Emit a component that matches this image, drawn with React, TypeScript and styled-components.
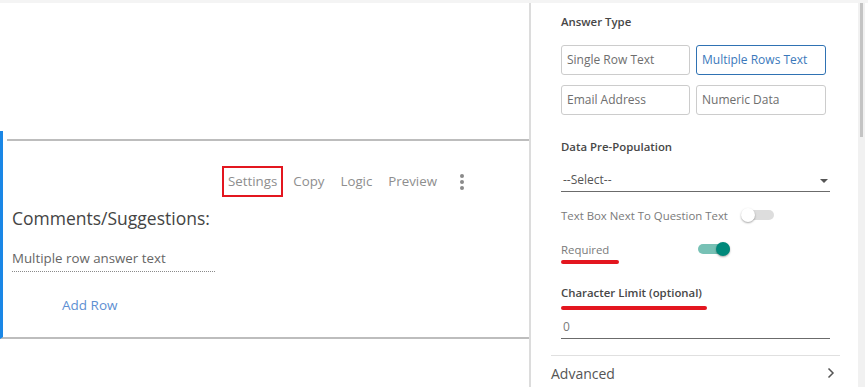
import React from 'react'
import styled, { createGlobalStyle } from 'styled-components'

const GlobalStyle = createGlobalStyle`
    html, body {
        margin: 0;
        padding: 0;
        background: #ffffff;
        font-family: 'Open Sans', 'Noto Sans', sans-serif;
    }
    * {
        box-sizing: border-box;
    }
`

const Page = styled.div`
    width: 868px;
    height: 387px;
    overflow: hidden;
    border-top: 3px solid #f4f4f4;
    display: flex;
`

const LeftPane = styled.div`
    width: 529px;
    padding-top: 128px;
`

const QuestionCard = styled.div`
    border-left: 3px solid #1a87e6;
    border-bottom: 2px solid #bdbdbd;
    padding-top: 8px;
    height: 208px;
`

const CardTopLine = styled.div`
    margin-left: 4px;
    height: 2px;
    background: #bdbdbd;
`

const Toolbar = styled.div`
    display: flex;
    align-items: center;
    justify-content: flex-end;
    gap: 16px;
    padding-right: 65px;
    margin-top: 25px;
    height: 31px;
`

const ToolLink = styled.span<{ highlighted?: boolean }>`
    font-size: 13.3px;
    color: #8e8e8e;
    line-height: 27px;
    padding: 0 ${props => props.highlighted ? '4px' : '0'};
    border: 2px solid ${props => props.highlighted ? '#e3161f' : 'transparent'};
    margin: 0 ${props => props.highlighted ? '-6px' : '-2px'};
`

const Kebab = styled.div`
    display: flex;
    flex-direction: column;
    gap: 2px;
    margin-left: 7px;
`

const Dot = styled.span`
    width: 4px;
    height: 4px;
    border-radius: 50%;
    background: #8a8a8a;
`

const CardBody = styled.div`
    padding-left: 9px;
`

const QuestionTitle = styled.div`
    font-size: 17.5px;
    color: #444444;
    line-height: 24px;
    margin-top: 9px;
`

const AnswerLine = styled.div`
    width: 203px;
    margin-top: 19px;
    font-size: 13.3px;
    color: #666666;
    line-height: 18px;
    padding-bottom: 4px;
    border-bottom: 1px dotted #8a8a8a;
`

const AddRow = styled.div`
    margin: 23px 0 0 50px;
    font-size: 13.5px;
    color: #5d8fd2;
    line-height: 20px;
`

const RightPanel = styled.div`
    width: 339px;
    display: flex;
    border-left: 2px solid #dcdcdc;
`

const PanelContent = styled.div`
    flex: 1;
    padding: 0 28px 0 30px;
`

const ScrollTrack = styled.div`
    width: 7px;
    margin-right: 3px;
    background: #f1f1f1;
    padding: 0 2px;
`

const ScrollThumb = styled.div`
    width: 3px;
    height: 134px;
    background: #c4c4c4;
`

const SectionLabel = styled.div<{ top: number }>`
    margin-top: ${props => props.top}px;
    font-size: 11.4px;
    font-weight: 600;
    color: #474747;
    line-height: 16px;
`

const OptionGrid = styled.div`
    margin-top: 15px;
    display: grid;
    grid-template-columns: 129px 130px;
    column-gap: 6px;
    row-gap: 10px;
`

const OptionBox = styled.div<{ selected?: boolean }>`
    height: 30px;
    border: 1px solid ${props => props.selected ? '#2f72b3' : '#cccccc'};
    border-radius: 3px;
    padding-left: 5px;
    font-size: 12px;
    line-height: 28px;
    color: ${props => props.selected ? '#3b79bb' : '#6e6e6e'};
`

const SelectBox = styled.div`
    margin-top: 14px;
    height: 23px;
    display: flex;
    align-items: center;
    justify-content: space-between;
    border-bottom: 1px solid #6b6b6b;
    font-size: 12px;
    color: #555555;
    padding: 0 2px 2px 2px;
`

const Caret = styled.span`
    width: 0;
    height: 0;
    border-left: 4px solid transparent;
    border-right: 4px solid transparent;
    border-top: 4px solid #555555;
    margin-top: 4px;
`

const ToggleRow = styled.div<{ top: number; gap: number }>`
    margin-top: ${props => props.top}px;
    height: 20px;
    display: flex;
    align-items: center;
    gap: ${props => props.gap}px;
    font-size: 11.4px;
    color: #7a7a7a;
`

const Track = styled.div<{ on?: boolean }>`
    position: relative;
    width: 32px;
    height: 10px;
    border-radius: 5px;
    background: ${props => props.on ? '#77c1b5' : '#dddddd'};
`

const Knob = styled.span<{ on?: boolean }>`
    position: absolute;
    top: -2px;
    left: ${props => props.on ? '18px' : '-1px'};
    width: 14px;
    height: 14px;
    border-radius: 50%;
    background: ${props => props.on ? '#00897b' : '#ffffff'};
    box-shadow: 0 1px 2px rgba(0, 0, 0, 0.35);
`

const Marker = styled.div<{ width: number; top: number }>`
    width: ${props => props.width}px;
    height: 4px;
    margin-top: ${props => props.top}px;
    border-radius: 2px;
    background: #e3161f;
`

const NumberInput = styled.div`
    margin-top: 7px;
    height: 22px;
    border-bottom: 1px solid #6b6b6b;
    padding-left: 2px;
    font-size: 12px;
    line-height: 20px;
    color: #7a7a7a;
`

const Divider = styled.div`
    margin: 16px -10px 0 -10px;
    height: 1px;
    background: #e0e0e0;
`

const AdvancedRow = styled.div`
    margin: 7px -6px 0 -10px;
    height: 20px;
    display: flex;
    align-items: center;
    justify-content: space-between;
    font-size: 14px;
    color: #555555;
`

const Chevron = () => (
    <svg width="10" height="12" viewBox="0 0 10 12">
        <path d="M2.5 1.5 L7 6 L2.5 10.5" fill="none" stroke="#555" strokeWidth="1.5" />
    </svg>
)

const answerTypes = [
    { label: 'Single Row Text' },
    { label: 'Multiple Rows Text', selected: true },
    { label: 'Email Address' },
    { label: 'Numeric Data' },
]

export default function App() {
    return (
        <>
            <GlobalStyle />
            <Page>
                <LeftPane>
                    <QuestionCard>
                        <CardTopLine />
                        <Toolbar>
                            <ToolLink highlighted>Settings</ToolLink>
                            <ToolLink>Copy</ToolLink>
                            <ToolLink>Logic</ToolLink>
                            <ToolLink>Preview</ToolLink>
                            <Kebab>
                                <Dot />
                                <Dot />
                                <Dot />
                            </Kebab>
                        </Toolbar>
                        <CardBody>
                            <QuestionTitle>Comments/Suggestions:</QuestionTitle>
                            <AnswerLine>Multiple row answer text</AnswerLine>
                            <AddRow>Add Row</AddRow>
                        </CardBody>
                    </QuestionCard>
                </LeftPane>
                <RightPanel>
                    <PanelContent>
                        <SectionLabel top={11}>Answer Type</SectionLabel>
                        <OptionGrid>
                            {answerTypes.map(item => (
                                <OptionBox key={item.label} selected={item.selected}>{item.label}</OptionBox>
                            ))}
                        </OptionGrid>
                        <SectionLabel top={24}>Data Pre-Population</SectionLabel>
                        <SelectBox>
                            <span>--Select--</span>
                            <Caret />
                        </SelectBox>
                        <ToggleRow top={13} gap={14}>
                            <span>Text Box Next To Question Text</span>
                            <Track><Knob /></Track>
                        </ToggleRow>
                        <ToggleRow top={14} gap={89}>
                            <span>Required</span>
                            <Track on><Knob on /></Track>
                        </ToggleRow>
                        <Marker width={58} top={1} />
                        <SectionLabel top={21}>Character Limit (optional)</SectionLabel>
                        <Marker width={146} top={5} />
                        <NumberInput>0</NumberInput>
                        <Divider />
                        <AdvancedRow>
                            <span>Advanced</span>
                            <Chevron />
                        </AdvancedRow>
                    </PanelContent>
                    <ScrollTrack>
                        <ScrollThumb />
                    </ScrollTrack>
                </RightPanel>
            </Page>
        </>
    )
}
